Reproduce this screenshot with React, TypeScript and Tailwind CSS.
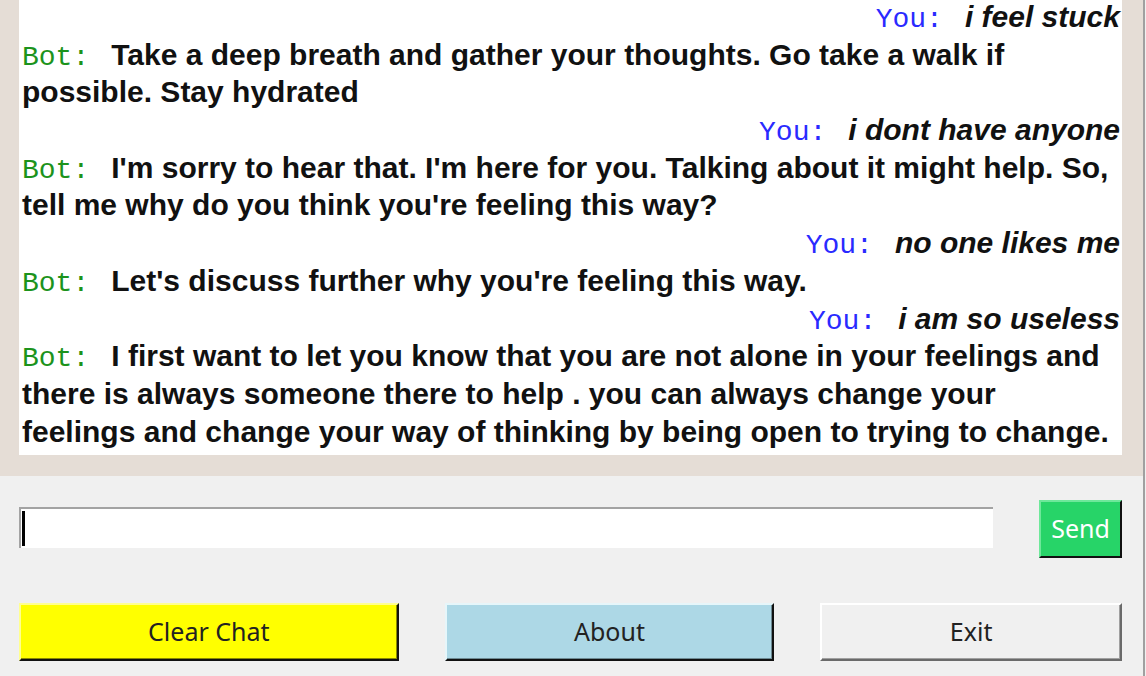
type Line = { who?: 'You' | 'Bot'; text: string };

const lines: Line[] = [
  { who: 'You', text: 'i feel stuck' },
  { who: 'Bot', text: 'Take a deep breath and gather your thoughts. Go take a walk if' },
  { text: 'possible. Stay hydrated' },
  { who: 'You', text: 'i dont have anyone' },
  { who: 'Bot', text: "I'm sorry to hear that. I'm here for you. Talking about it might help. So," },
  { text: "tell me why do you think you're feeling this way?" },
  { who: 'You', text: 'no one likes me' },
  { who: 'Bot', text: "Let's discuss further why you're feeling this way." },
  { who: 'You', text: 'i am so useless' },
  { who: 'Bot', text: 'I first want to let you know that you are not alone in your feelings and' },
  { text: 'there is always someone there to help . you can always change your' },
  { text: 'feelings and change your way of thinking by being open to trying to change.' },
];

const mono = "font-['Liberation_Mono','Courier_New',monospace] text-[28px] font-normal leading-none";

const ChatLine = ({ line }: { line: Line }) => {
  if (line.who === 'You') {
    return (
      <div className="h-[37.7px] whitespace-nowrap pr-[2px] text-right">
        <span className={`${mono} text-[#2a2aff]`}>You:</span>
        <span className="ml-[22px] italic">{line.text}</span>
      </div>
    );
  }
  return (
    <div className="h-[37.7px] whitespace-nowrap pl-[3px]">
      {line.who === 'Bot' && <span className={`${mono} mr-[22px] text-[#1c931c]`}>Bot:</span>}
      <span>{line.text}</span>
    </div>
  );
};

const btnFont = "font-['Noto_Sans','Open_Sans',sans-serif] text-[25px]";

export default function App() {
  return (
    <div className="flex h-[676px] w-[1146px] overflow-hidden bg-[#f0f0f0]">
      <div className="flex w-[1143px] flex-col">
        {/* chat log */}
        <div className="h-[476px] bg-[#e5ddd6] pl-[19px] pr-[21px]">
          <div className="h-[455px] overflow-hidden bg-white font-['Liberation_Sans',Arial,sans-serif] text-[30px] font-bold leading-[37.7px] text-[#111]">
            <div className="-mt-[2px]">
              {lines.map((l, i) => (
                <ChatLine key={i} line={l} />
              ))}
            </div>
          </div>
        </div>

        {/* input */}
        <div className="flex-1 pl-[19px] pr-[21px]">
          <div className="mt-[24px] flex items-start">
            <div className="mt-[7px] flex h-[41px] w-[974px] items-center border-l-2 border-t-2 border-[#a3a3a3] bg-white pl-[1px]">
              <div className="h-[35px] w-[3px] bg-black" />
            </div>
            <button className={`${btnFont} ml-auto h-[58px] w-[83px] border-2 border-b-[#111] border-l-[#6ee89a] border-r-[#111] border-t-[#6ee89a] bg-[#27d468] text-white`}>
              Send
            </button>
          </div>

          <div className="mt-[45px] flex items-start gap-[46px]">
            <button className={`${btnFont} h-[58px] w-[380px] border-2 border-b-[#111] border-l-[#ffff90] border-r-[#111] border-t-[#ffff90] bg-[#ffff00] text-[#222] shadow-[inset_-1px_-1px_0_#8a8a00]`}>
              Clear Chat
            </button>
            <button className={`${btnFont} h-[58px] w-[330px] border-2 border-b-[#111] border-l-[#e6f6fa] border-r-[#111] border-t-[#e6f6fa] bg-[#add8e6] text-[#222] shadow-[inset_-1px_-1px_0_#6d8a93]`}>
              About
            </button>
            <button className={`${btnFont} h-[58px] w-[302px] border-2 border-b-[#6a6a6a] border-l-white border-r-[#6a6a6a] border-t-white bg-[#f0f0f0] text-[#222] shadow-[inset_-1px_-1px_0_#a0a0a0]`}>
              Exit
            </button>
          </div>
        </div>
      </div>
      <div className="w-[2px] bg-[#a0a0a0]" />
      <div className="w-[1px] bg-[#f0f0f0]" />
    </div>
  );
}
